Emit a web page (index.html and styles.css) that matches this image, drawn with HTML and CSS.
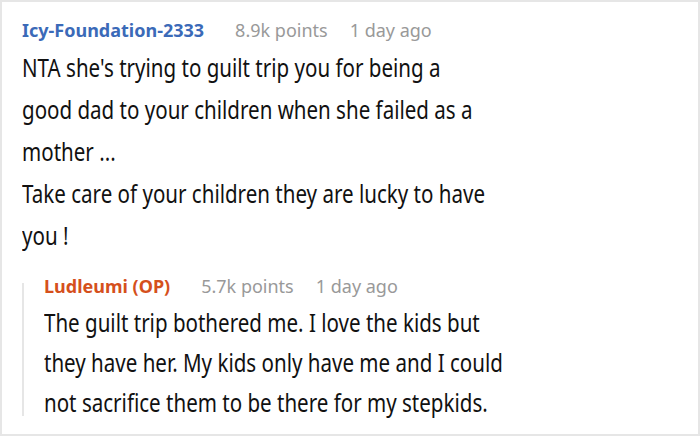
FILE: index.html
```html
<!DOCTYPE html>
<html lang="en">
<head>
    <meta charset="UTF-8">
    <meta name="viewport" content="width=device-width, initial-scale=1.0">
    <title>Comments</title>
    <link rel="stylesheet" href="styles.css">
</head>
<body>
    <div class="thread">
        <div class="comment">
            <div class="meta">
                <span class="author">Icy-Foundation-2333</span>
                <span class="info">8.9k points</span>
                <span class="info">1 day ago</span>
            </div>
            <p class="text">NTA she's trying to guilt trip you for being a good dad to your children when she failed as a mother ...<br>Take care of your children they are lucky to have you !</p>

            <div class="reply">
                <div class="meta">
                    <span class="author op">Ludleumi (OP)</span>
                    <span class="info">5.7k points</span>
                    <span class="info">1 day ago</span>
                </div>
                <p class="text">The guilt trip bothered me. I love the kids but they have her. My kids only have me and I could not sacrifice them to be there for my stepkids.</p>
            </div>
        </div>
    </div>
</body>
</html>
```

FILE: styles.css
```css
body {
    margin: 0;
    background: #fff;
    font-family: "Noto Sans", "Open Sans", sans-serif;
}
.thread {
    width: 700px;
    height: 436px;
    box-sizing: border-box;
    border: 2px solid #e6e6e6;
    overflow: hidden;
}
.comment {
    padding: 12px 20px 0 20px;
}
.meta {
    display: flex;
    gap: 22px;
    font-size: 18px;
    line-height: 32px;
}
.author {
    font-weight: 700;
    color: #3b6ab8;
    margin-right: 9px;
}
.author.op {
    color: #d5501c;
}
.info {
    color: #999;
}

.text {
    margin: 0;
    width: 594px;
    font-size: 26px;
    line-height: 42px;
    color: #111;
    transform: scaleX(0.79);
    transform-origin: left top;
}
.reply {
    position: relative;
    margin-top: 14px;
    padding-left: 22px;
}
.reply::before {
    content: "";
    position: absolute;
    left: 0;
    top: 13px;
    bottom: 6px;
    width: 2px;
    background: #e6e6e6;
}
.reply .text {
    width: 598px;
    line-height: 40px;
}
```
